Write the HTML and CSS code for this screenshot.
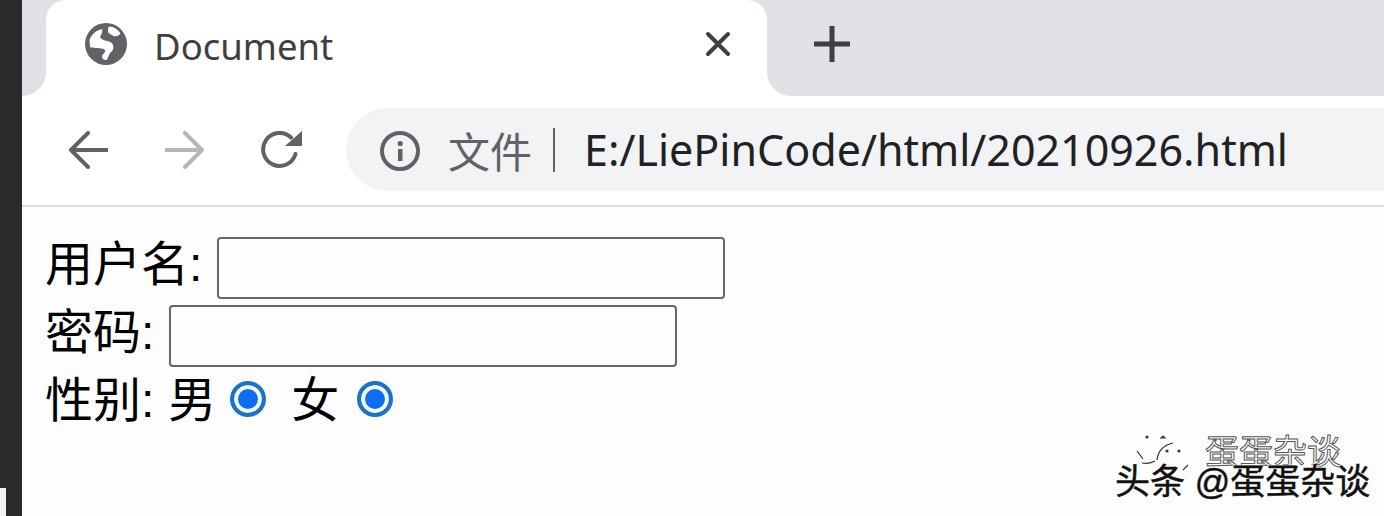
FILE: index.html
```html
<!DOCTYPE html>
<html lang="zh">
<head>
    <meta charset="utf-8">
    <title>Document</title>
    <link rel="stylesheet" href="styles.css">
</head>
<body>
    <div class="edge"><div class="edge-box"></div></div>
    <div class="browser">
        <div class="tabstrip">
            <div class="strip-left"></div>
            <div class="tab">
                <svg class="globe" viewBox="0 0 42 42">
                    <circle cx="21" cy="21" r="21" fill="#5f6368"/>
                    <path d="M4.500 17C7 11 11 7.500 17 6c1 3-1 6-2 8 2 4 7 3 12 6 2 3 2 7-1 9-2 2-3 5-4 8-2 0-5 0-5-4 1-2 4-4 3-6-3-3-12-1-15-3z" fill="#fff"/>
                    <path d="M24 3.500c5 0 9 3 11.500 7-2 3-5 3-7 2.500-2-1-3-2-5-3-1-2-.5-5 .5-6.500z" fill="#fff"/>
                </svg>
                <span class="tab-title">Document</span>
                <svg class="tab-close" viewBox="0 0 26 26"><path d="M3 3l20 20M23 3L3 23" stroke="#3c4043" stroke-width="4" stroke-linecap="round"/></svg>
            </div>
            <div class="strip-right">
                <svg class="new-tab" viewBox="0 0 36 36"><path d="M18 1v34M1 18h34" stroke="#3c4043" stroke-width="5" stroke-linecap="round"/></svg>
            </div>
        </div>
        <div class="toolbar">
            <svg class="nav-icon back" viewBox="0 0 40 38"><path d="M39 19H3M20 2L3 19l17 17" fill="none" stroke="#5f6368" stroke-width="4" stroke-linecap="round" stroke-linejoin="round"/></svg>
            <svg class="nav-icon forward" viewBox="0 0 40 38"><path d="M1 19h36M20 2l17 17-17 17" fill="none" stroke="#b4b6b9" stroke-width="4" stroke-linecap="round" stroke-linejoin="round"/></svg>
            <svg class="nav-icon reload" viewBox="0 0 41 38">
                <path d="M30 6.500A16.500 16.500 0 1 0 34.500 23" fill="none" stroke="#5f6368" stroke-width="4" stroke-linecap="round"/>
                <path d="M41 0v15H24z" fill="#5f6368"/>
            </svg>
            <div class="omnibox">
                <svg class="info" viewBox="0 0 40 40">
                    <circle cx="20" cy="20" r="18" fill="none" stroke="#5f6368" stroke-width="4"/>
                    <rect x="18" y="18" width="4.500" height="12" fill="#5f6368"/>
                    <circle cx="20.200" cy="12.500" r="2.600" fill="#5f6368"/>
                </svg>
                <span class="scheme">文件</span>
                <span class="divider"></span>
                <span class="url">E:/LiePinCode/html/20210926.html</span>
            </div>
        </div>
        <form class="page">
            <div class="row">
                <label>用户名:</label>
                <input type="text">
            </div>
            <div class="row">
                <label>密码:</label>
                <input type="password">
            </div>
            <div class="row gender">
                <label>性别:</label>
                <span>男</span>
                <input type="radio" name="male" checked>
                <span class="second">女</span>
                <input class="last" type="radio" name="female" checked>
            </div>
        </form>
    </div>
    <div class="mark">
        <svg class="mark-icon" viewBox="0 0 60 50" fill="none" stroke="#333" stroke-width="1.200">
            <path d="M22 28c1-9 7-15 16-17"/>
            <path d="M2 19l6 8M7 31c4 1 9 0 13-2M48 38l5-5M26 6l2-2 2 2z"/>
            <circle cx="12" cy="5" r="1" fill="#222"/>
            <circle cx="32" cy="19" r="1" fill="#222"/>
            <circle cx="44" cy="19" r="1" fill="#222"/>
        </svg>
        <span class="mark-top">蛋蛋杂谈</span>
        <span class="mark-main">头条 @蛋蛋杂谈</span>
    </div>
</body>
</html>
```

FILE: styles.css
```css
html, body {
    margin: 0;
    height: 100%;
}

body {
    display: flex;
    height: 516px;
    overflow: hidden;
    background: #fdfdfe;
    font-family: "Liberation Sans", "Noto Sans CJK SC", sans-serif;
    color: #000;
}

.edge {
    width: 22px;
    flex-shrink: 0;
    background: #2a2a2c;
    display: flex;
    align-items: flex-end;
}

.edge-box {
    width: 6px;
    height: 28px;
    background: #f4f4f4;
}

.browser {
    flex: 1;
    display: flex;
    flex-direction: column;
}

/* tab row */
.tabstrip {
    height: 96px;
    display: flex;
    background: linear-gradient(#dfe1e5 50%, #fff 50%);
}

.strip-left {
    width: 24px;
    background: #dfe1e5;
    border-bottom-right-radius: 24px;
}

.tab {
    width: 721px;
    display: flex;
    align-items: center;
    padding-left: 39px;
    padding-right: 36px;
    box-sizing: border-box;
    background: #fff;
    border-radius: 20px 20px 0 0;
}

.globe {
    width: 42px;
    height: 42px;
    margin-top: -8px;
}

.tab-title {
    margin-left: 27px;
    font-family: "Noto Sans", sans-serif;
    font-size: 36.500px;
    color: #3c4043;
    margin-top: -5px;
}

.tab-close {
    width: 26px;
    height: 26px;
    margin-left: auto;
    margin-top: -8px;
}

.strip-right {
    flex: 1;
    display: flex;
    align-items: center;
    padding-left: 47px;
    background: #dfe1e5;
    border-bottom-left-radius: 24px;
}

.new-tab {
    width: 36px;
    height: 36px;
    margin-top: -8px;
}

/* address row */
.toolbar {
    height: 107px;
    padding-bottom: 2px;
    display: flex;
    align-items: center;
    background: #fff;
    border-bottom: 2px solid #dadce0;
}

.nav-icon {
    width: 40px;
    height: 38px;
    flex-shrink: 0;
}

.back {
    margin-left: 46px;
}

.forward {
    margin-left: 57px;
}

.reload {
    width: 41px;
    margin-left: 56px;
}

.omnibox {
    flex: 1;
    height: 83px;
    margin-left: 44px;
    display: flex;
    align-items: center;
    padding-left: 34px;
    background: #f1f3f4;
    border-radius: 42px 0 0 42px;
    font-family: "Noto Sans CJK SC", sans-serif;
    font-size: 42px;
    white-space: nowrap;
}

.info {
    width: 40px;
    height: 40px;
    flex-shrink: 0;
    margin-top: 2px;
}

.scheme {
    margin-left: 28px;
    color: #5f6368;
}

.divider {
    width: 2px;
    height: 44px;
    margin-left: 21px;
    background: #5f6368;
}

.url {
    margin-left: 29px;
    font-family: "Noto Sans", sans-serif;
    font-size: 43px;
    color: #202124;
}

/* form */
.page {
    padding: 27px 0 0 23px;
    font-size: 48px;
}

.row {
    height: 68px;
    display: flex;
    align-items: center;
    gap: 15px;
}

.row label,
.row span {
    line-height: 1;
    margin-top: -7px;
}

input[type="text"],
input[type="password"] {
    width: 508px;
    height: 62px;
    box-sizing: border-box;
    padding: 0;
    background: #fdfdfe;
    border: 2px solid #666;
    border-radius: 4px;
}

.gender {
    gap: 14px;
}

.gender input {
    appearance: none;
    width: 36px;
    height: 36px;
    margin: -10px 0 0;
    border: 4px solid #1a73c8;
    border-radius: 50%;
    background: #0b6ef5;
    box-shadow: inset 0 0 0 4px #f4f9ff;
}

.gender .second {
    margin-left: 11px;
}

.gender .last {
    margin-left: 4px;
}

/* watermark over the page */
.mark {
    position: absolute;
    right: 16px;
    bottom: 16px;
    width: 253px;
    height: 70px;
}

.mark-icon {
    position: absolute;
    left: 20px;
    top: 2px;
    width: 60px;
    height: 50px;
}

.mark-top {
    position: absolute;
    left: 90px;
    top: 7px;
    font-size: 34px;
    line-height: 30px;
    white-space: nowrap;
    color: #fff;
    -webkit-text-stroke: 1px #555;
}

.mark-main {
    position: absolute;
    left: 0;
    top: 37px;
    font-size: 35px;
    line-height: 30px;
    white-space: nowrap;
    color: #111;
    -webkit-text-stroke: 0.5px #111;
    text-shadow: 1px 1px 0 #fff, -1px -1px 0 #fff, 2px 2px 2px #fff;
}
```
